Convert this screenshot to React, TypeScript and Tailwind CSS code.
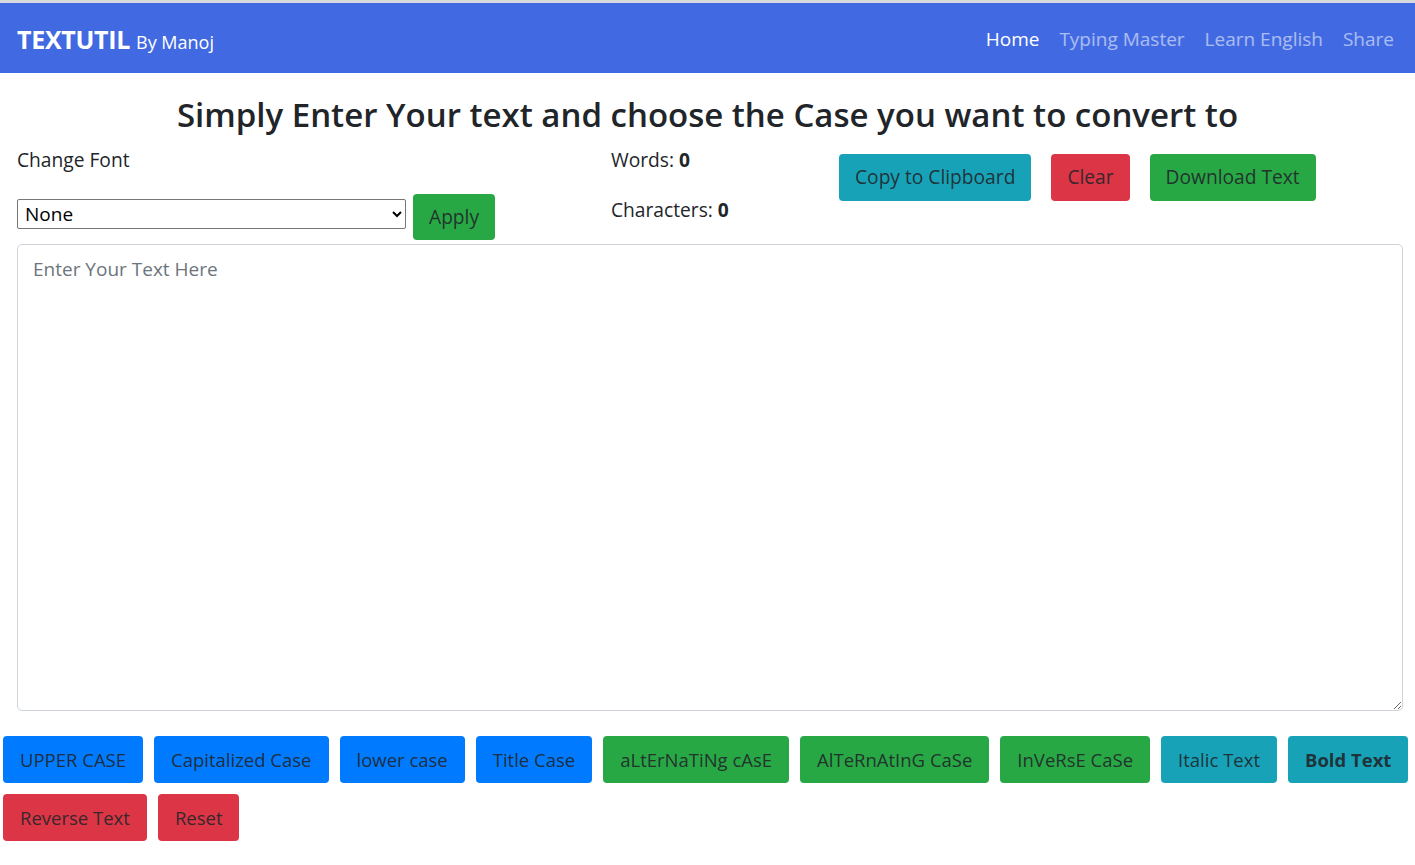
import { useState } from 'react'

const caseButtons = [
  { label: 'UPPER CASE', color: 'bg-[#007bff]' },
  { label: 'Capitalized Case', color: 'bg-[#007bff]' },
  { label: 'lower case', color: 'bg-[#007bff]' },
  { label: 'Title Case', color: 'bg-[#007bff]' },
  { label: 'aLtErNaTiNg cAsE', color: 'bg-[#28a745]' },
  { label: 'AlTeRnAtInG CaSe', color: 'bg-[#28a745]' },
  { label: 'InVeRsE CaSe', color: 'bg-[#28a745]' },
  { label: 'Italic Text', color: 'bg-[#17a2b8]' },
  { label: 'Bold Text', color: 'bg-[#17a2b8] font-bold' },
  { label: 'Reverse Text', color: 'bg-[#dc3545]' },
  { label: 'Reset', color: 'bg-[#dc3545]' },
]

export default function App() {
  const [text, setText] = useState('')
  const words = text.split(/\s+/).filter((w) => w.length > 0).length

  return (
    <div className="min-h-screen bg-white text-[#212529] font-['Open_Sans',sans-serif]">
      {/* Navbar */}
      <div className="border-t-[3px] border-[#d6d9de]">
        <nav className="h-[70px] bg-[#4169e1] flex items-center justify-between pl-[17px] pr-[21px] pt-[3px]">
          <div className="flex items-baseline gap-[6px] text-white">
            <span className="text-[25px] font-bold tracking-[-0.3px]">TEXTUTIL</span>
            <span className="text-[18px]">By Manoj</span>
          </div>
          <div className="flex items-center gap-[20px] text-[19px]">
            <a className="text-white">Home</a>
            <a className="text-white/55">Typing Master</a>
            <a className="text-white/55">Learn English</a>
            <a className="text-white/55">Share</a>
          </div>
        </nav>
      </div>

      {/* Heading */}
      <h2 className="text-center text-[33px] font-semibold leading-none mt-[25px] mb-[16px]">
        Simply Enter Your text and choose the Case you want to convert to
      </h2>

      <div className="pl-[17px] pr-[12px]">
        {/* Controls row */}
        <div className="flex">
          <div className="w-[594px]">
            <p className="text-[19.2px] leading-[26px]">Change Font</p>
            <div className="flex items-start gap-[7px] mt-[21px]">
              <select className="w-[389px] h-[30px] mt-[5px] border border-[#767676] rounded-[2px] text-[19px] text-black px-[3px] bg-white">
                <option>None</option>
              </select>
              <button className="h-[46px] px-[16px] rounded-[4px] bg-[#28a745] text-[19.2px] text-[#212529]/90">
                Apply
              </button>
            </div>
          </div>
          <div className="w-[228px] text-[19.2px] leading-[26px]">
            <p>
              Words: <b>{words}</b>
            </p>
            <p className="mt-[24px]">
              Characters: <b>{text.length}</b>
            </p>
          </div>
          <div className="flex gap-[20px] mt-[7px] h-[47px]">
            <button className="px-[16px] rounded-[4px] bg-[#17a2b8] text-[19.2px] text-[#212529]/90">
              Copy to Clipboard
            </button>
            <button className="px-[16px] rounded-[4px] bg-[#dc3545] text-[19.2px] text-[#212529]/90">
              Clear
            </button>
            <button className="px-[16px] rounded-[4px] bg-[#28a745] text-[19.2px] text-[#212529]/90">
              Download Text
            </button>
          </div>
        </div>

        {/* Text area */}
        <textarea
          value={text}
          onChange={(e) => setText(e.target.value)}
          placeholder="Enter Your Text Here"
          className="block w-full h-[467px] mt-[4px] border border-[#ced4da] rounded-[5px] px-[15px] py-[10px] text-[19px] placeholder:text-[#6c757d] outline-none"
        />
      </div>

      {/* Case buttons */}
      <div className="flex flex-wrap gap-x-[11px] gap-y-[11px] pl-[3px] pr-[2px] mt-[25px]">
        {caseButtons.map((b) => (
          <button
            key={b.label}
            className={`h-[47px] px-[17px] rounded-[4px] text-[18.5px] whitespace-nowrap text-[#212529]/90 ${b.color}`}
          >
            {b.label}
          </button>
        ))}
      </div>
    </div>
  )
}
